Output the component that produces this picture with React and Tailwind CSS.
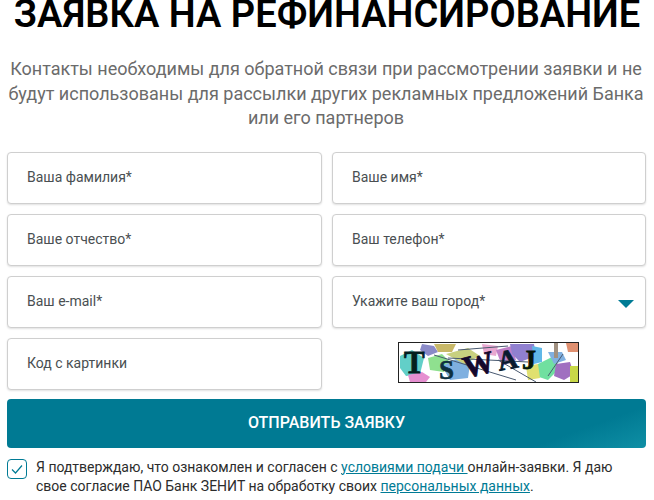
import React from "react";

function Field({ label, arrow }) {
    return (
        <div className="h-[52px] flex items-center justify-between pl-[19px] pr-[11px] bg-white border border-[#cfcfcf] rounded-[4px] shadow-[0_1px_2px_rgba(0,0,0,0.12)] text-[14px] text-[#4a4f52]">
            <span>{label}</span>
            {arrow && <span className="w-0 h-0 border-x-[8px] border-x-transparent border-t-[8px] border-t-[#007b95] mt-[4px]"></span>}
        </div>
    )
}

function Captcha() {
    const serif = "'Liberation Serif', serif"
    return (
        <svg width="181" height="41" viewBox="0 0 181 41" className="block">
            <rect x="0.5" y="0.5" width="180" height="40" fill="#fff" />
            <path d="M2 14 L14 8 L26 16 L22 32 L8 34 L2 26 Z" fill="#62cfc8" />
            <path d="M24 2 L36 4 L40 10 L30 14 L22 8 Z" fill="#8a8ac8" />
            <path d="M10 33 L24 30 L32 35 L28 40 L12 40 Z" fill="#e58fd0" />
            <path d="M30 16 L44 12 L52 20 L46 30 L32 28 Z" fill="#8fe08f" />
            <path d="M36 2 L58 2 L54 10 L40 10 Z" fill="#c8b868" />
            <path d="M44 24 L60 16 L72 22 L70 36 L52 38 Z" fill="#7fb0e0" />
            <path d="M48 12 L70 6 L82 14 L66 22 Z" fill="#c8d080" />
            <path d="M84 2 L100 4 L98 14 L86 12 Z" fill="#e8a8d0" />
            <path d="M98 8 L114 4 L118 18 L104 24 Z" fill="#c080c8" />
            <path d="M112 2 L136 2 L138 14 L122 20 L114 12 Z" fill="#9080d0" />
            <path d="M134 4 L144 6 L144 20 L136 22 Z" fill="#60b8e8" />
            <path d="M140 22 L156 14 L162 26 L150 38 L138 34 Z" fill="#70e0a0" />
            <path d="M158 22 L172 20 L176 32 L166 38 L156 34 Z" fill="#a070c0" />
            <path d="M150 10 L164 10 L168 18 L156 22 Z" fill="#80b0e0" />
            <path d="M168 1 L180 1 L180 10 L170 10 Z" fill="#e09070" />
            <path d="M128 24 L140 22 L142 36 L130 38 Z" fill="#e0e070" />
            <rect x="156" y="1" width="4" height="15" fill="#a09080" />
            <rect x="172" y="24" width="8" height="16" fill="#c8d848" />
            <path d="M36 13 L118 38 M50 16 L130 20 M100 18 L138 40 M60 8 L110 4 M150 34 L165 12" stroke="#4a5a70" strokeWidth="1" fill="none" />
            <text x="6" y="31" fontFamily={serif} fontWeight="700" fontSize="31" fill="#04201e" stroke="#04201e" strokeWidth="0.8">T</text>
            <text x="41" y="37" fontFamily={serif} fontWeight="700" fontSize="27" fill="#0d3040" stroke="#0d3040" strokeWidth="0.6">S</text>
            <text x="65" y="33" fontFamily={serif} fontWeight="700" fontSize="31" fill="#14082c" stroke="#14082c" strokeWidth="0.8" transform="rotate(-14 80 22)">W</text>
            <text x="100" y="27" fontFamily={serif} fontWeight="700" fontSize="28" fill="#081a2e" stroke="#081a2e" strokeWidth="0.8" transform="rotate(-10 110 20)">A</text>
            <text x="124" y="27" fontFamily={serif} fontWeight="700" fontSize="28" fill="#04180a" stroke="#04180a" strokeWidth="0.8">J</text>
            <rect x="0.5" y="0.5" width="180" height="40" fill="none" stroke="#222" />
        </svg>
    )
}

function App() {
    return (
        <div className="w-[654px] h-[500px] overflow-hidden bg-white font-['Roboto',sans-serif]">
            <h1 className="text-[38px] leading-[48px] font-semibold text-black text-center mt-[-10px] whitespace-nowrap">ЗАЯВКА НА РЕФИНАНСИРОВАНИЕ</h1>
            <p className="mt-[19px] pl-[5px] pr-[7px] text-[18px] leading-[24.5px] text-[#6b6b6b] text-center">
                Контакты необходимы для обратной связи при рассмотрении заявки и не<br />
                будут использованы для рассылки других рекламных предложений Банка<br />
                или его партнеров
            </p>
            <div className="mt-[21px] mx-[7px] w-[639px] grid grid-cols-[315px_314px] gap-x-[10px] gap-y-[10px]">
                <Field label="Ваша фамилия*" />
                <Field label="Ваше имя*" />
                <Field label="Ваше отчество*" />
                <Field label="Ваш телефон*" />
                <Field label="Ваш e-mail*" />
                <Field label="Укажите ваш город*" arrow />
                <Field label="Код с картинки" />
                <div className="flex items-center justify-center pr-[1px] pb-[2px]"><Captcha /></div>
            </div>
            <button className="mt-[9px] mx-[7px] w-[639px] h-[49px] rounded-[4px] bg-[linear-gradient(160deg,#007a93_0%,#007a93_85%,#0f8fa5_100%)] text-white text-[16px] font-medium flex items-center justify-center">ОТПРАВИТЬ ЗАЯВКУ</button>
            <div className="mt-[10px] mx-[7px] flex gap-[9px] text-[14px] leading-[19px] text-[#2c2c2c]">
                <span className="w-[20px] h-[20px] mt-[1px] shrink-0 flex items-center justify-center border border-[#007b95] rounded-[4px]">
                    <svg width="14" height="14" viewBox="0 0 14 14" fill="none" stroke="#007b95" strokeWidth="1.2"><path d="M2 7.5 L5.5 11 L12 3.5" /></svg>
                </span>
                <p className="w-[600px]">
                    Я подтверждаю, что ознакомлен и согласен с <a className="text-[#007b95] underline">условиями подачи </a>онлайн-заявки. Я даю свое согласие ПАО Банк ЗЕНИТ на обработку своих <a className="text-[#007b95] underline">персональных данных</a>.
                </p>
            </div>
        </div>
    )
}

export default App
